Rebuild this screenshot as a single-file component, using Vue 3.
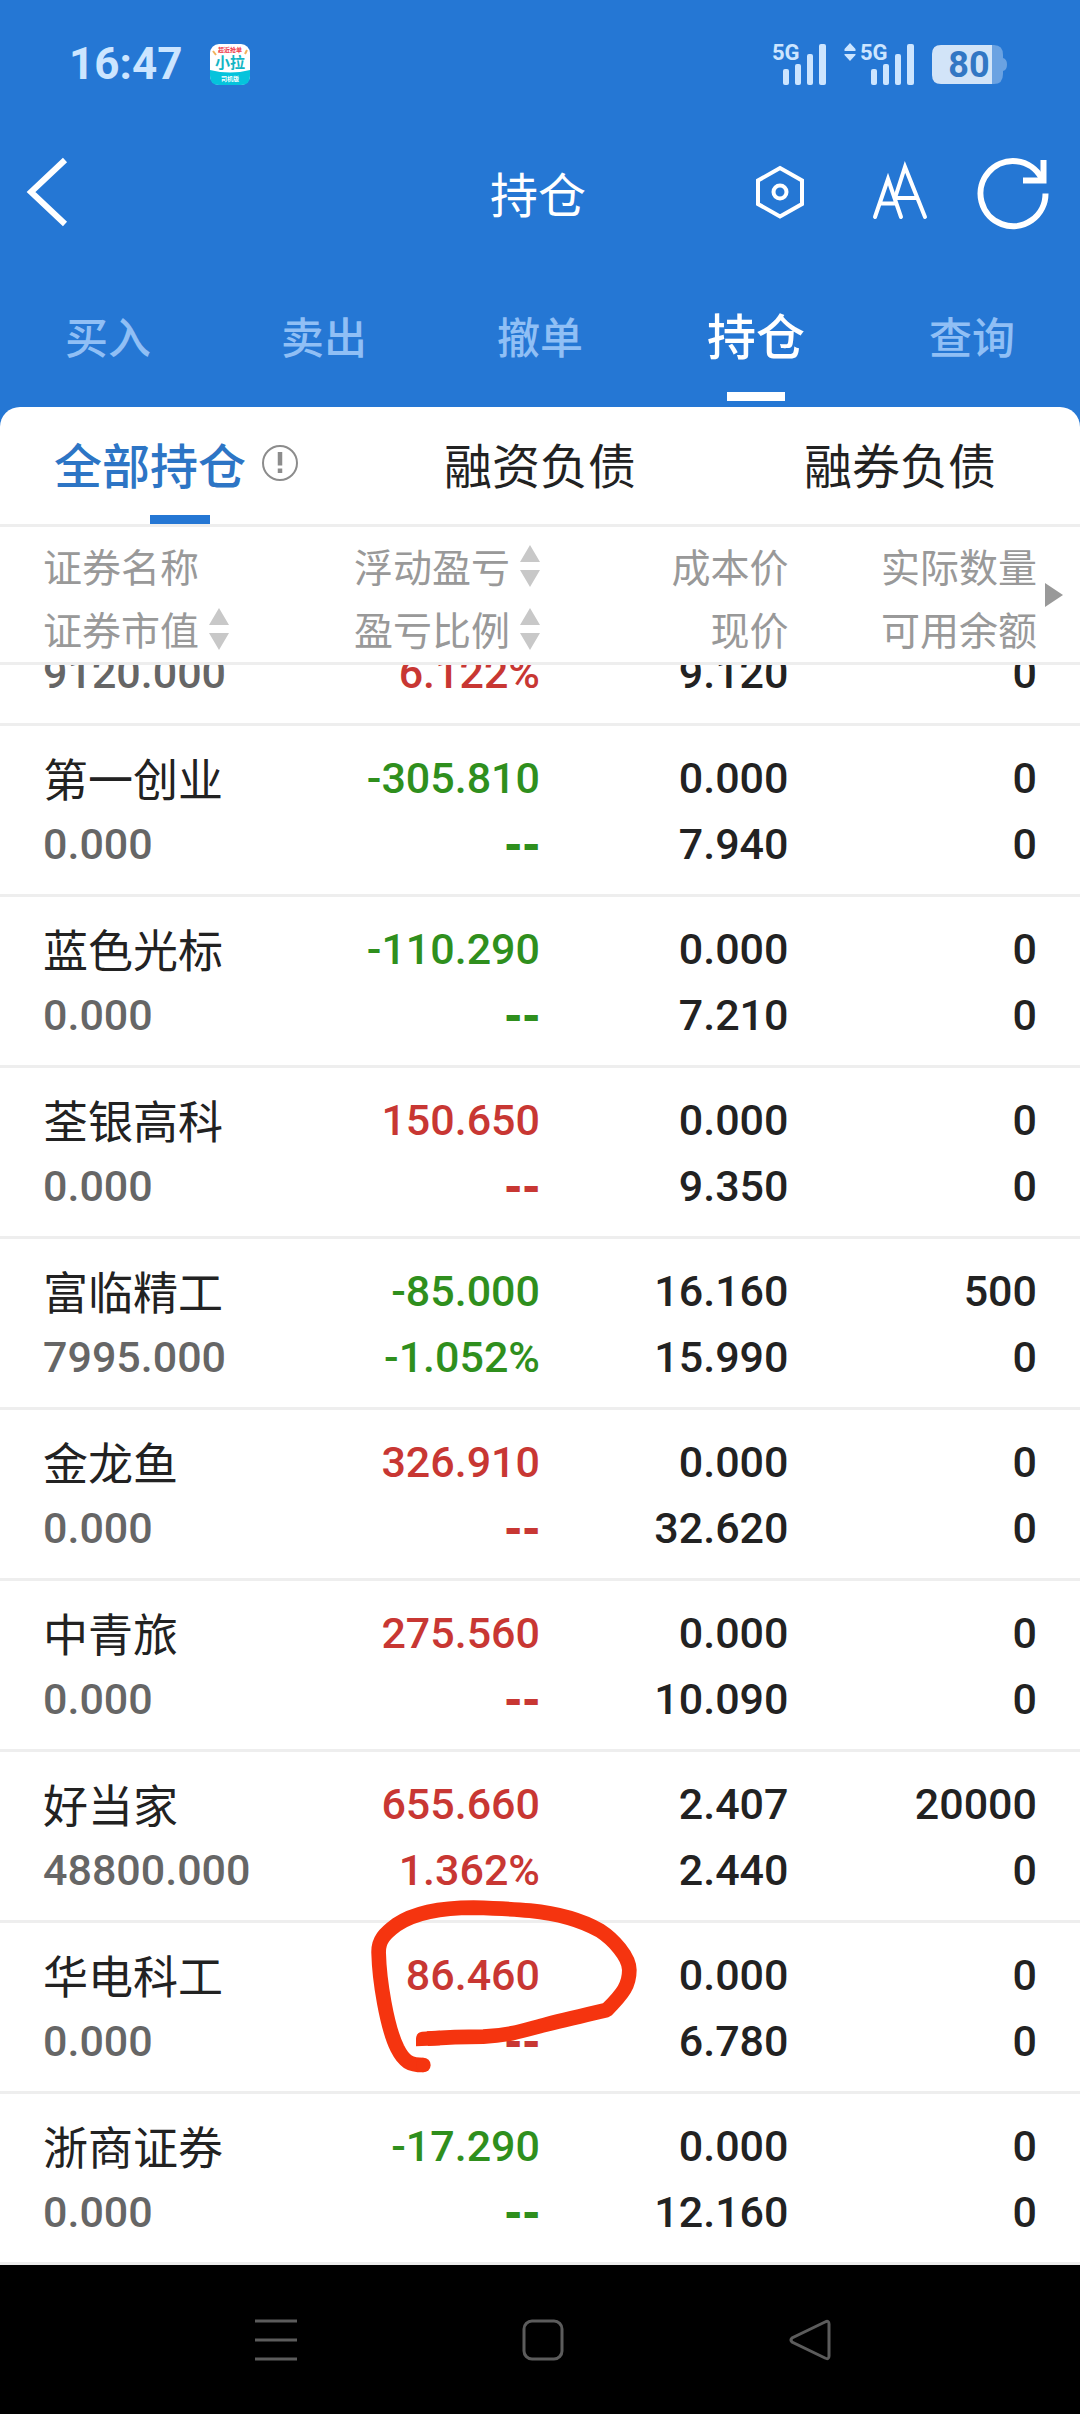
<template>
  <div class="phone">
    <div class="top">
      <div class="status">
        <div class="status-left">
          <span class="clock">16:47</span>
          <svg class="app-icon" viewBox="0 0 40 41" width="40" height="41">
            <rect width="40" height="41" rx="9" fill="#fff" />
            <path d="M0 26 Q20 31 40 26 V32 Q40 41 31 41 H9 Q0 41 0 32 Z" fill="#05c3dc" />
            <path d="M3 7 l3 4 M37 6 l-2 4" stroke="#f2b35c" stroke-width="2" />
            <text x="20" y="8" font-size="6" fill="#ee3344">超近抢单</text>
            <text x="20" y="24" font-size="15" fill="#12b5c4">小拉</text>
            <text x="20" y="37" font-size="6" fill="#fff">司机版</text>
          </svg>
        </div>
        <div class="status-right">
          <svg viewBox="0 0 55 42" width="55" height="42" fill="#cce5ff">
            <text class="net" x="0" y="17">5G</text>
            <rect x="11" y="26" width="6" height="16" rx="2" />
            <rect x="23" y="21" width="6" height="21" rx="2" />
            <rect x="35" y="11" width="6" height="31" rx="2" />
            <rect x="47" y="1" width="7" height="41" rx="2" />
          </svg>
          <svg viewBox="0 0 71 42" width="71" height="42" fill="#cce5ff">
            <path d="M6 0 L11.5 6 V8 H0.500 V6 Z M0.500 11 H11.500 V12 L6 18 L0.500 12 Z" />
            <text class="net" x="16" y="17">5G</text>
            <rect x="27" y="26" width="6" height="16" rx="2" />
            <rect x="39" y="21" width="6" height="21" rx="2" />
            <rect x="51" y="11" width="6" height="31" rx="2" />
            <rect x="63" y="1" width="7" height="41" rx="2" />
          </svg>
          <svg viewBox="0 0 75 39" width="75" height="39">
            <path d="M60 0 H62 Q71 0 71 10 V13 Q75 14 75 19.500 Q75 25 71 26 V29 Q71 39 62 39 H60 Z" fill="#6aa2e2" />
            <path d="M60 0 H9 Q0 0 0 9 V30 Q0 39 9 39 H60 Z" fill="#d2e4f8" />
            <text class="level" x="37" y="32">80</text>
          </svg>
        </div>
      </div>

      <header class="header">
        <button class="icon-btn back" aria-label="返回">
          <svg viewBox="0 0 40 72" width="40" height="72" class="line thick">
            <path d="M37 4 L3 36 L37 68" />
          </svg>
        </button>
        <h1>持仓</h1>
        <div class="actions">
          <button class="icon-btn" aria-label="设置">
            <svg viewBox="0 0 72 72" width="72" height="72" class="line">
              <path d="M36 12 L58 24.500 V48 L36 60.500 L14 48 V24.500 Z" />
              <circle cx="36" cy="36" r="6.500" />
            </svg>
          </button>
          <button class="icon-btn" aria-label="字体">
            <svg viewBox="0 0 72 72" width="72" height="72" class="line round">
              <path d="M15 61 L28 23 L41 61 M20 47.500 H36" />
              <path d="M35 42 L45 11 L65 61 M35 42 H57" />
            </svg>
          </button>
          <button class="icon-btn" aria-label="刷新">
            <svg viewBox="0 0 72 72" width="72" height="72" class="line thick">
              <path d="M69.500 37.500 A32.500 32.500 0 1 1 65.500 22" />
              <path d="M67.500 4 V24.500 H47" />
            </svg>
          </button>
        </div>
      </header>

      <nav class="tabs">
        <button v-for="tab in tabs" :key="tab" :class="{ active: tab === activeTab }" @click="activeTab = tab">
          {{ tab }}
        </button>
      </nav>
    </div>

    <main class="sheet">
      <div class="subtabs">
        <button v-for="sub in subtabs" :key="sub" :class="{ active: sub === activeSub }" @click="activeSub = sub">
          {{ sub }}
          <svg v-if="sub === '全部持仓'" class="info" viewBox="0 0 36 36" width="36" height="36">
            <circle cx="18" cy="18" r="17" fill="none" stroke="#8c8c8c" stroke-width="2" />
            <path d="M18 7 V20.500 M18 23.500 V28" stroke="#8c8c8c" stroke-width="4.500" />
          </svg>
        </button>
      </div>

      <table>
        <thead>
          <tr>
            <th v-for="(col, i) in columns" :key="i">
              <span v-for="label in col" :key="label.text" class="label">
                {{ label.text }}
                <svg v-if="label.sort" viewBox="0 0 20 42" width="20" height="42" fill="#c8c8c8">
                  <path d="M10 0 L20 17 H0 Z M0 25 H20 L10 42 Z" />
                </svg>
              </span>
              <svg v-if="i === 3" class="more" viewBox="0 0 18 24" width="18" height="24">
                <path d="M0 0 L18 12 L0 24 Z" fill="#999" />
              </svg>
            </th>
          </tr>
        </thead>
        <tbody>
          <tr v-for="(row, i) in rows" :key="i" :class="{ partial: !row.name }">
            <td>
              <span v-if="row.name" class="name">{{ row.name }}</span>
              <span class="value">{{ row.value }}</span>
            </td>
            <td :class="row.trend">
              <span v-if="row.name">{{ row.profit }}</span>
              <span :class="{ dash: row.ratio === '--' }">{{ row.ratio }}</span>
              <svg v-if="row.marked" class="mark" viewBox="90 474 810 528" width="270" height="176">
                <path
                  d="M250 975 C210 975 192 965 172 925 C140 860 118 720 116 640 C114 600 135 580 170 554 C230 514 310 503 400 503 C470 505 520 507 570 512 C650 520 720 538 780 572 C820 598 868 650 868 690 C868 735 850 760 800 810 C740 824 680 838 620 853 C560 868 520 885 430 890 C360 890 330 891 262 896"
                  stroke="#f5340f" stroke-width="44" fill="none" stroke-linejoin="bevel" />
                <circle cx="250" cy="975" r="22" fill="#f5340f" />
                <path d="M228 919 V895 Q230 877 246 875 L300 872 V916 Z" fill="#f5340f" />
              </svg>
            </td>
            <td>
              <span v-if="row.name">{{ row.cost }}</span>
              <span>{{ row.price }}</span>
            </td>
            <td>
              <span v-if="row.name">{{ row.amount }}</span>
              <span>0</span>
            </td>
          </tr>
        </tbody>
      </table>
    </main>

    <footer class="sysnav">
      <button class="icon-btn" aria-label="菜单">
        <svg viewBox="0 0 42 42" width="42" height="42">
          <path d="M0 2 H42 M0 21 H42 M0 40 H42" />
        </svg>
      </button>
      <button class="icon-btn" aria-label="主页">
        <svg viewBox="0 0 42 42" width="42" height="42">
          <rect x="2" y="2" width="38" height="38" rx="8" />
        </svg>
      </button>
      <button class="icon-btn" aria-label="后退">
        <svg viewBox="0 0 42 42" width="42" height="42">
          <path d="M36 3 L3 19 Q1 21 3 23 L36 39 Q40 41 40 37 V5 Q40 1 36 3 Z" />
        </svg>
      </button>
    </footer>
  </div>
</template>

<script setup>
import { ref } from 'vue';

const tabs = ['买入', '卖出', '撤单', '持仓', '查询'];
const activeTab = ref('持仓');

const subtabs = ['全部持仓', '融资负债', '融券负债'];
const activeSub = ref('全部持仓');

const columns = [
  [{ text: '证券名称' }, { text: '证券市值', sort: true }],
  [{ text: '浮动盈亏', sort: true }, { text: '盈亏比例', sort: true }],
  [{ text: '成本价' }, { text: '现价' }],
  [{ text: '实际数量' }, { text: '可用余额' }]
];

// la primera fila queda medio oculta bajo la cabecera
const rows = ref([
  { value: '9120.000', ratio: '6.122%', price: '9.120', trend: 'up' },
  { name: '第一创业', value: '0.000', profit: '-305.810', ratio: '--', cost: '0.000', price: '7.940', amount: '0', trend: 'down' },
  { name: '蓝色光标', value: '0.000', profit: '-110.290', ratio: '--', cost: '0.000', price: '7.210', amount: '0', trend: 'down' },
  { name: '荃银高科', value: '0.000', profit: '150.650', ratio: '--', cost: '0.000', price: '9.350', amount: '0', trend: 'up' },
  { name: '富临精工', value: '7995.000', profit: '-85.000', ratio: '-1.052%', cost: '16.160', price: '15.990', amount: '500', trend: 'down' },
  { name: '金龙鱼', value: '0.000', profit: '326.910', ratio: '--', cost: '0.000', price: '32.620', amount: '0', trend: 'up' },
  { name: '中青旅', value: '0.000', profit: '275.560', ratio: '--', cost: '0.000', price: '10.090', amount: '0', trend: 'up' },
  { name: '好当家', value: '48800.000', profit: '655.660', ratio: '1.362%', cost: '2.407', price: '2.440', amount: '20000', trend: 'up' },
  { name: '华电科工', value: '0.000', profit: '86.460', ratio: '--', cost: '0.000', price: '6.780', amount: '0', trend: 'up', marked: true },
  { name: '浙商证券', value: '0.000', profit: '-17.290', ratio: '--', cost: '0.000', price: '12.160', amount: '0', trend: 'down' }
]);
</script>

<style>
body {
  margin: 0;
  background: #000;
}
</style>

<style scoped>
.phone {
  min-height: 100vh;
  display: flex;
  flex-direction: column;
  background: #2577d4;
  font-family: Roboto, "Noto Sans CJK SC", sans-serif;
  color: #222;
}

button {
  border: none;
  padding: 0;
  background: transparent;
  font-family: inherit;
  cursor: pointer;
}

svg {
  display: block;
  flex-shrink: 0;
  overflow: visible;
}

.top {
  color: white;
}

.status {
  height: 128px;
  padding: 0 73px 0 69px;
  display: flex;
  align-items: center;
  justify-content: space-between;
}

.status-left {
  display: flex;
  align-items: center;
  gap: 28px;
}

.clock {
  font-size: 44px;
  line-height: 48px;
  font-weight: 700;
  color: #cce5ff;
}

.app-icon text {
  font-family: "Noto Sans CJK SC", sans-serif;
  font-weight: 700;
  text-anchor: middle;
}

.status-right {
  display: flex;
  align-items: center;
  gap: 17px;
}

.net {
  font-size: 22px;
  font-weight: 700;
}

.level {
  font-size: 36px;
  font-weight: 700;
  text-anchor: middle;
  fill: #3277c4;
}

.header {
  height: 128px;
  padding: 0 32px 0 28px;
  display: grid;
  grid-template-columns: 1fr auto 1fr;
  align-items: center;
}

.back {
  justify-self: start;
}

h1,
.subtabs button,
th,
.name {
  font-family: "Noto Sans CJK SC", sans-serif;
}

h1 {
  margin: 0;
  font-size: 48px;
  line-height: 64px;
  font-weight: 400;
}

.actions {
  display: flex;
  justify-content: flex-end;
  gap: 44px;
}

.line {
  fill: none;
  stroke: white;
  stroke-width: 4;
}

.thick {
  stroke-width: 6;
}

.round {
  stroke-linecap: round;
}

.tabs {
  display: flex;
  height: 151px;
}

.tabs button {
  position: relative;
  flex: 1;
  padding-top: 14px;
  font-size: 43px;
  line-height: 64px;
  font-weight: 500;
  color: #90bff5;
}

.tabs .active {
  font-size: 49px;
  color: white;
}

.tabs .active::after,
.subtabs .active::after {
  content: "";
  position: absolute;
  left: 50%;
  bottom: 6px;
  width: 58px;
  height: 9px;
  margin-left: -29px;
  background: white;
}

.sheet {
  flex: 1;
  background: white;
  border-radius: 20px 20px 0 0;
}

.subtabs {
  display: flex;
  height: 117px;
  border-bottom: 3px solid #eee;
}

.subtabs button {
  position: relative;
  flex: 1;
  display: flex;
  align-items: center;
  justify-content: center;
  gap: 16px;
  padding-bottom: 6px;
  font-size: 48px;
  line-height: 64px;
  color: #222;
}

.subtabs .active {
  font-weight: 500;
  color: #2d75c5;
}

.subtabs .active::after {
  bottom: 0;
  width: 60px;
  margin-left: -30px;
  background: #2577d4;
}

.info {
  margin-right: 8px;
}

table,
tbody {
  display: block;
}

thead {
  display: block;
  padding: 7px 0 2px;
  border-bottom: 3px solid #eee;
}

tr {
  display: grid;
  grid-template-columns: repeat(4, 1fr);
  padding: 0 43px;
}

th {
  position: relative;
  padding: 0;
  font-size: 39px;
  line-height: 63px;
  font-weight: 400;
  color: #999;
}

.label {
  display: flex;
  align-items: center;
  justify-content: flex-end;
  gap: 10px;
  white-space: nowrap;
}

th:first-child .label {
  justify-content: flex-start;
}

.more {
  position: absolute;
  top: 49px;
  right: -26px;
}

tbody tr {
  padding-top: 19px;
  padding-bottom: 17px;
  border-bottom: 3px solid #eee;
}

tbody .partial {
  height: 41px;
  padding-top: 0;
  align-content: end;
  overflow: hidden;
}

td {
  position: relative;
  padding: 0;
  font-size: 43px;
  line-height: 66px;
  font-weight: 500;
  text-align: right;
}

td:first-child {
  text-align: left;
}

td span {
  display: block;
}

.name {
  font-size: 45px;
  font-weight: 400;
}

.value {
  color: #666;
}

.dash {
  font-family: "DejaVu Sans", sans-serif;
  font-weight: 700;
}

.up {
  color: #c83733;
}

.down {
  color: #2f8f1d;
}

.mark {
  position: absolute;
  left: 78px;
  top: -44px;
  z-index: 1;
}

.sysnav {
  height: 149px;
  padding: 0 137px 0 143px;
  display: flex;
  align-items: center;
  background: black;
}

.sysnav button {
  flex: 1;
  display: flex;
  justify-content: center;
}

.sysnav svg {
  fill: none;
  stroke: #5c5c5c;
  stroke-width: 3;
}
</style>
